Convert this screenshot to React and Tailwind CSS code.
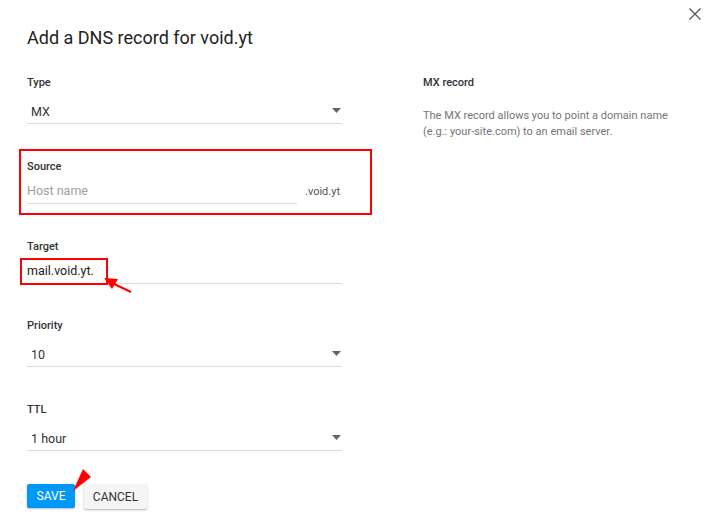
import React from "react";

const Caret = () => (
  <svg width="9" height="5" viewBox="0 0 9 5" className="shrink-0 -mt-[4px]">
    <path d="M0 0 L9 0 L4.5 5 Z" fill="#666" />
  </svg>
);

const Label = ({ children }) => (
  <div className="text-[11px] font-medium leading-[14px] text-[#333]">{children}</div>
);

const SelectField = ({ label, value, className = "" }) => (
  <div className={className}>
    <Label>{label}</Label>
    <div className="flex items-center justify-between border-b border-[#dcdcdc] pl-1 pr-[1px] h-[34px] pt-[12px]">
      <span className="text-[12.5px] text-[#333]">{value}</span>
      <Caret />
    </div>
  </div>
);

const Annotations = () => (
  <svg
    className="absolute inset-0 pointer-events-none"
    width="707"
    height="529"
    viewBox="0 0 707 529"
  >
    <rect x="20" y="150" width="351" height="64" fill="none" stroke="#f00" strokeWidth="2" />
    <rect x="21" y="259" width="86" height="25" fill="none" stroke="#f00" strokeWidth="2" />
    <line x1="131" y1="292" x2="112" y2="283" stroke="#f00" strokeWidth="2" />
    <path d="M104 278 L118 279 L112 289 Z" fill="#f00" />
    <path d="M73 491 L83 469 L91 477 Z" fill="#f00" />
  </svg>
);

export default function App() {
  return (
    <div
      className="relative w-[707px] h-[529px] bg-white overflow-hidden"
      style={{ fontFamily: "Roboto, 'Liberation Sans', sans-serif" }}
    >
      <button className="absolute right-[6px] top-[8px]">
        <svg width="12" height="12" viewBox="0 0 12 12">
          <path d="M0.5 0.5 L11.5 11.5 M11.5 0.5 L0.5 11.5" stroke="#555" strokeWidth="1.3" />
        </svg>
      </button>
      <div className="pl-[27px] pt-[27px]">
        <h1 className="text-[18px] leading-[22px] text-[#222]">Add a DNS record for void.yt</h1>
        <div className="flex mt-[27px]">
          <div className="w-[315px]">
            <SelectField label="Type" value="MX" />

            <div className="mt-[36px]">
              <Label>Source</Label>
              <div className="flex items-center">
                <div className="w-[270px] flex items-center border-b border-[#dcdcdc] h-[30px] pt-[5px] text-[12.5px] text-[#9e9e9e]">
                  Host name
                </div>
                <span className="ml-[8px] mt-[7px] text-[11px] text-[#555]">.void.yt</span>
              </div>
            </div>

            <div className="mt-[36px]">
              <Label>Target</Label>
              <div className="flex items-center border-b border-[#dcdcdc] h-[30px] pt-[5px] text-[12.5px] text-[#222]">
                mail.void.yt.
              </div>
            </div>

            <SelectField label="Priority" value="10" className="mt-[35px]" />
            <SelectField label="TTL" value="1 hour" className="mt-[36px]" />

            <div className="flex gap-[9px] mt-[33px]">
              <button className="h-[24px] w-[48px] rounded-[2px] bg-[#0098f7] text-white text-[12px] shadow-[0_1px_2px_rgba(0,0,0,0.25)]">
                SAVE
              </button>
              <button className="h-[25px] w-[63px] rounded-[2px] bg-[#f5f5f5] text-[#333] text-[12px] shadow-[0_1px_2px_rgba(0,0,0,0.3)]">
                CANCEL
              </button>
            </div>
          </div>

          <div className="ml-[81px] w-[260px]">
            <Label>MX record</Label>
            <p className="mt-[18px] text-[11px] leading-[16px] text-[#757575]">
              The MX record allows you to point a domain name (e.g.: your-site.com) to an email server.
            </p>
          </div>
        </div>
      </div>
      <Annotations />
    </div>
  );
}
